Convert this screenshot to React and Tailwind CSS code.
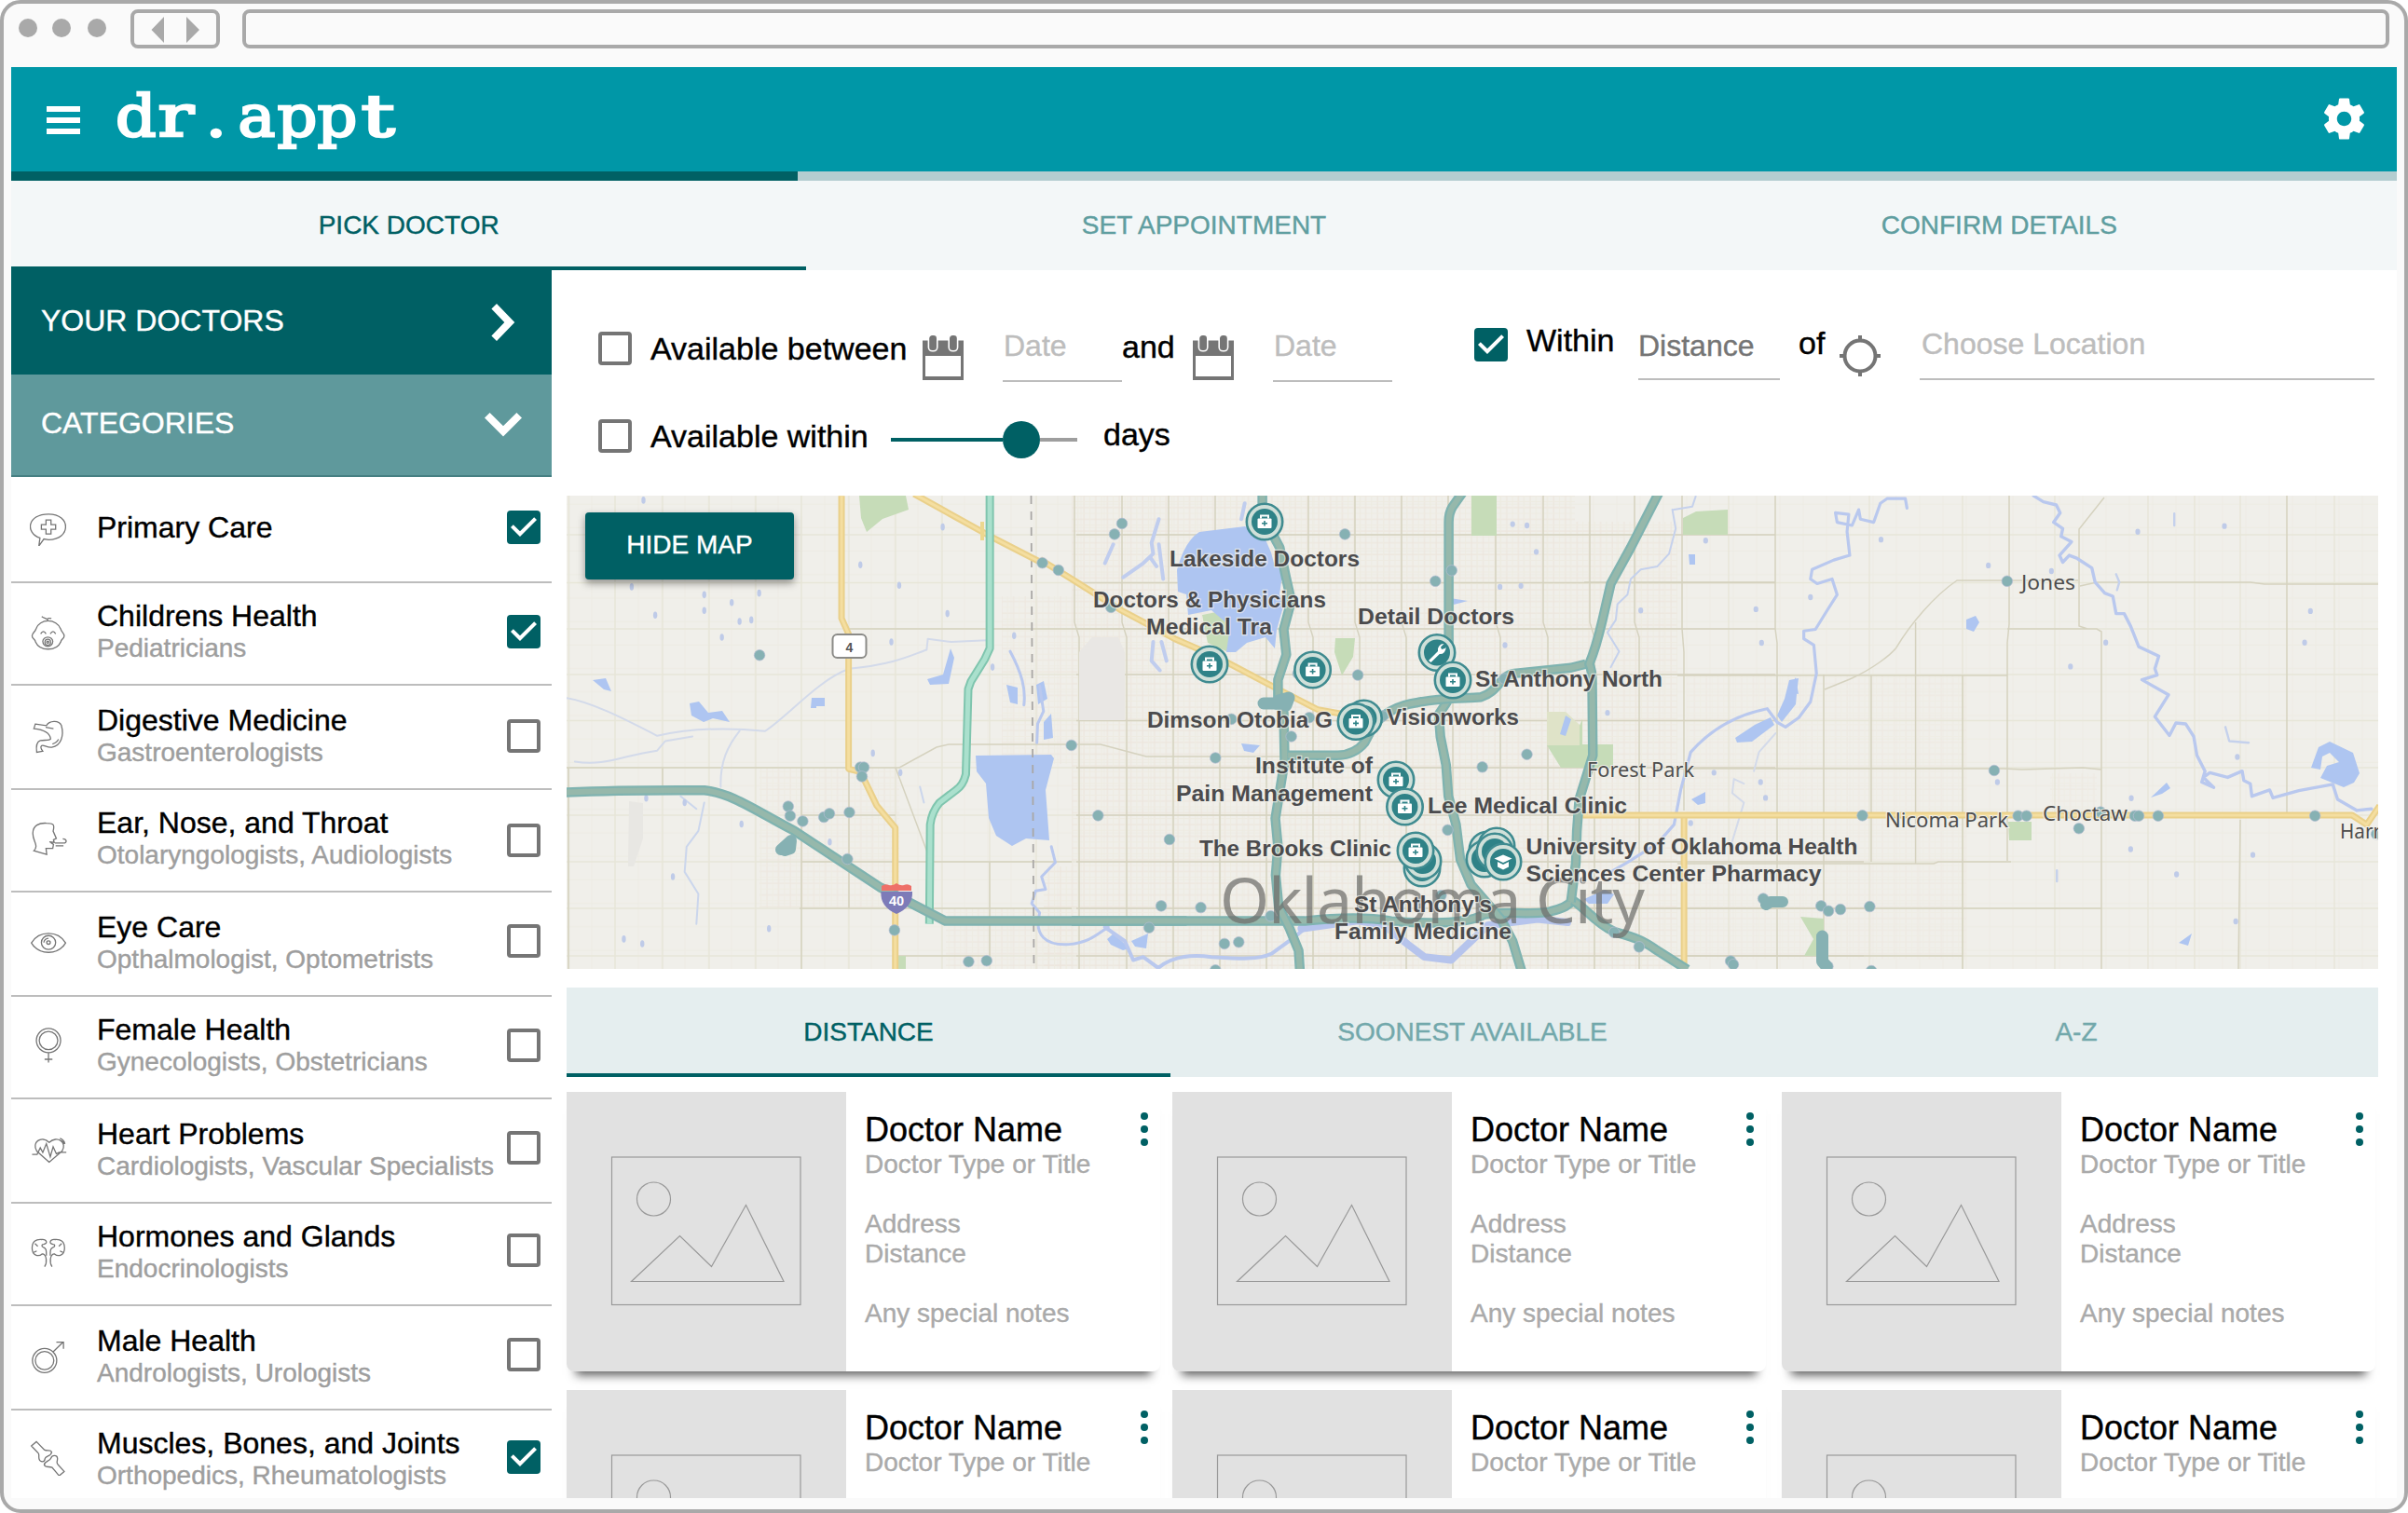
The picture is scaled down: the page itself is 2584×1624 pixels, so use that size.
import React from "react";

const Check = () => (
  <span className="block size-9 shrink-0 rounded bg-[#006064]">
    <svg viewBox="3 3 18 18" className="size-9">
      <path d="M10 17l-5-5 1.41-1.41L10 14.17l7.59-7.59L19 8l-9 9z" fill="#fff" />
    </svg>
  </span>
);
const Box = () => <span className="block size-9 shrink-0 rounded border-4 border-[#757575] bg-white" />;

/* Category icons: thin line drawings, each in a 40px box */
const UPPER = "scale(.3827 .3571)";
const LOWER = "scale(.3827 .3597)";
const ICONS = {
  care: {
    t: `translate(-32 -46) ${UPPER}`,
    d: "M112,217 C70,202 76,145 136,145 C200,145 200,222 136,222 L123,220 L109,241 Z M129,163h14v14h13v14h-13v14h-14v-14h-13v-14h13z",
  },
  baby: {
    t: `translate(-32 -158) ${UPPER}`,
    d: "M101,490 C105,475 120,466 135,466 C150,466 165,475 170,490 C172,500 180,503 180,511 C180,520 172,520 170,530 C164,545 150,551 135,551 C118,551 106,545 100,530 C98,520 90,520 90,511 C90,503 98,500 101,490 M135,466 C133,458 125,460 117,453 M132,461 C135,457 138,457 144,459 M114,505 q8,-14 15,0 M141,505 q8,-14 15,0 M120,528 a14,13 0 1,1 28,0 a14,15 0 1,1 -28,0 M126,530 a8,9 0 1,1 16,0 a8,9 0 1,1 -16,0 M131,530 a3,3 0 1,1 6,0 a3,3 0 1,1 -6,0",
  },
  stomach: {
    t: `translate(-32 -270) ${UPPER}`,
    d: "M99,776 L130,781 C138,765 165,763 172,780 C180,810 172,842 145,846 C132,848 120,836 116,842 C112,846 118,855 120,858 L103,861 C101,845 102,830 113,826 C122,823 138,827 142,821 C140,803 125,793 95,790 Z M128,786 L150,790 M147,836 C155,834 162,826 164,822",
  },
  ent: {
    t: `translate(-32 -382) ${UPPER}`,
    d: "M131,1168 L95,1157 C110,1140 92,1130 92,1105 C92,1080 110,1073 130,1074 C150,1074 154,1078 149,1098 L158,1120 L150,1124 L152,1132 L139,1130 L150,1138 L148,1150 L129,1150 Z M154,1134 H178 C189,1134 188,1121 176,1121 M156,1142 h22",
  },
  eye: {
    t: `translate(-32 -490) ${UPPER}`,
    d: "M88,1434 C110,1396 162,1396 184,1434 C162,1472 110,1472 88,1434Z M116,1433 a20,21 0 1,1 40,0 a20,21 0 1,1 -40,0 M123,1433 a13,13 0 0,1 13,-13 M131,1433 a5,5 0 1,1 10,0 a5,5 0 1,1 -10,0",
  },
  female: {
    t: `translate(-32 -42) ${LOWER}`,
    d: "M102,158 a34,36 0 1,1 68,0 a34,36 0 1,1 -68,0 M110,158 a26,27 0 1,1 52,0 a26,27 0 1,1 -52,0 M136,195 V224 M125,214 H147",
  },
  heart: {
    t: `translate(-32 -152) ${LOWER}`,
    d: "M138,521 L103,488 C88,462 115,440 138,462 C160,440 190,462 174,488 Z M90,498 H104 L113,478 L120,492 L130,466 L141,505 L149,475 L158,496 L166,492 H186 M168,450 q12,4 14,17 M172,457 q6,3 7,10",
  },
  glands: {
    t: `translate(-32 -262) ${LOWER}`,
    d: "M125,833 C133,820 131,795 118,795 C108,804 90,800 90,778 C90,758 100,751 116,752 C132,750 135,765 122,766 C116,766 116,774 122,775 C130,778 130,784 130,800 M146,833 C138,820 140,795 153,795 C163,804 181,800 181,778 C181,758 171,751 155,752 C139,750 136,765 149,766 C155,766 155,774 149,775 C141,778 141,784 141,800 M98,764 l8,8 M95,790 l8,-4 M173,764 l-8,8 M176,790 l-8,-4",
  },
  male: {
    t: `translate(-32 -374) ${LOWER}`,
    d: "M91,1113 a34,36 0 1,1 68,0 a34,36 0 1,1 -68,0 M99,1113 a26,27 0 1,1 52,0 a26,27 0 1,1 -52,0 M149,1087 L177,1058 M158,1058 H178 V1078",
  },
  bones: {
    t: `translate(-32 -484) ${LOWER}`,
    d: "M88,1368 L102,1355 L125,1380 C133,1384 142,1378 145,1386 C144,1400 128,1396 126,1406 C126,1418 112,1416 110,1408 C107,1398 112,1392 106,1388 Z M180,1444 L166,1457 L146,1432 C138,1428 128,1434 124,1424 C126,1412 140,1414 143,1404 C146,1394 160,1394 161,1404 C162,1414 156,1418 163,1424 Z",
  },
};

const LineIcon = ({ name }) => (
  <svg className="size-10" fill="none" stroke="#757575" strokeWidth="1.3">
    <g transform={ICONS[name].t}>
      <path d={ICONS[name].d} vectorEffect="non-scaling-stroke" />
    </g>
  </svg>
);

const CATEGORIES = [
  { icon: "care", title: "Primary Care", on: true, h: "h-[114px]", side: "pt-[34px]" },
  { icon: "baby", title: "Childrens Health", sub: "Pediatricians", on: true, h: "h-[110px]", side: "pt-8" },
  { icon: "stomach", title: "Digestive Medicine", sub: "Gastroenterologists", h: "h-[112px]", side: "pt-[34px]" },
  { icon: "ent", title: "Ear, Nose, and Throat", sub: "Otolaryngologists, Audiologists", h: "h-[110px]", side: "pt-[34px]" },
  { icon: "eye", title: "Eye Care", sub: "Opthalmologist, Optometrists", h: "h-[112px]", side: "pt-8" },
  { icon: "female", title: "Female Health", sub: "Gynecologists, Obstetricians", h: "h-[110px]", side: "pt-8" },
  { icon: "heart", title: "Heart Problems", sub: "Cardiologists, Vascular Specialists", h: "h-[112px]", side: "pt-8" },
  { icon: "glands", title: "Hormones and Glands", sub: "Endocrinologists", h: "h-[110px]", side: "pt-[30px]" },
  { icon: "male", title: "Male Health", sub: "Andrologists, Urologists", h: "h-[112px]", side: "pt-8" },
  { icon: "bones", title: "Muscles, Bones, and Joints", sub: "Orthopedics, Rheumatologists", on: true, h: "h-[110px]", side: "pt-[30px]" },
];

function Category({ c }) {
  return (
    <li className={`flex shrink-0 border-b-2 border-[#bdbdbd] pr-3 pl-5 ${c.h}`}>
      <div className={`w-[72px] shrink-0 ${c.side}`}>
        <LineIcon name={c.icon} />
      </div>
      <div className={`flex flex-1 flex-col justify-end whitespace-nowrap ${c.sub ? "pb-[21px]" : "pb-[40px]"}`}>
        <p className="text-[32px] leading-9 text-black">{c.title}</p>
        {c.sub && <p className="text-[28px] leading-[34px] text-[#9e9e9e]">{c.sub}</p>}
      </div>
      <div className={c.side}>
        <div className="pt-0.5">{c.on ? <Check /> : <Box />}</div>
      </div>
    </li>
  );
}

const LOGO = [
  ["d", 1.1],
  ["r", 1.3],
  [".", 1.15],
  ["a", 1.08],
  ["p", 1.08],
  ["p", 1.08],
  ["t", 1.45],
];

function Header() {
  return (
    <header className="flex h-[112px] items-start bg-[#0097a7] text-white">
      <div className="mt-[42px] ml-[38px] flex w-9 flex-col gap-1.5">
        <span className="h-1.5 bg-white" />
        <span className="h-1.5 bg-white" />
        <span className="h-1.5 bg-white" />
      </div>
      <h1 className="mt-[17px] ml-[38px] flex font-['DejaVu_Serif',serif] text-[62px] leading-[72px] [-webkit-text-stroke:2.6px_white]">
        {LOGO.map(([ch, sx], i) => (
          <span key={i} className="inline-block w-[43.3px] text-center">
            <span className="inline-block" style={{ transform: `scaleX(${sx})` }}>
              {ch}
            </span>
          </span>
        ))}
      </h1>
      <svg viewBox="0 0 24 24" className="mt-[29px] mr-[30px] ml-auto size-[53px]" fill="#fff">
        <path d="M19.43 12.98c.04-.32.07-.64.07-.98s-.03-.66-.07-.98l2.11-1.65c.19-.15.24-.42.12-.64l-2-3.46c-.12-.22-.39-.3-.61-.22l-2.49 1c-.52-.4-1.08-.73-1.69-.98l-.38-2.65C14.46 2.18 14.25 2 14 2h-4c-.25 0-.46.18-.49.42l-.38 2.65c-.61.25-1.17.59-1.69.98l-2.49-1c-.23-.09-.49 0-.61.22l-2 3.46c-.13.22-.07.49.12.64l2.11 1.65c-.04.32-.07.65-.07.98s.03.66.07.98l-2.11 1.65c-.19.15-.24.42-.12.64l2 3.46c.12.22.39.3.61.22l2.49-1c.52.4 1.08.73 1.69.98l.38 2.65c.03.24.24.42.49.42h4c.25 0 .46-.18.49-.42l.38-2.65c.61-.25 1.17-.59 1.69-.98l2.49 1c.23.09.49 0 .61-.22l2-3.46c.12-.22.07-.49-.12-.64l-2.11-1.65zM12 15.5c-1.93 0-3.5-1.57-3.5-3.5s1.57-3.5 3.5-3.5 3.5 1.57 3.5 3.5-1.57 3.5-3.5 3.5z" />
      </svg>
    </header>
  );
}

const Calendar = () => (
  <svg viewBox="0 0 44 48" className="mt-2 h-12 w-11 shrink-0">
    <path d="M0 5.5h44V48H0z" fill="#757575" />
    <path d="M3 22h38v22H3z" fill="#fff" />
    <g fill="#757575" stroke="#fff" strokeWidth="1.6">
      <rect x="6.4" y="-.8" width="9.4" height="17.6" rx="4" />
      <rect x="28.2" y="-.8" width="9.4" height="17.6" rx="4" />
    </g>
  </svg>
);

const DateField = () => (
  <div className="mt-px ml-[42px] h-[57px] w-32 border-b-2 border-[#bdbdbd] pl-px text-[32px] leading-9 text-[#bdbdbd]">Date</div>
);

function Filters() {
  return (
    <section className="pt-[62px] pl-[50px] text-[34px] leading-[38px] whitespace-nowrap text-black">
      <div className="flex h-24 items-start">
        <div className="mt-1">
          <Box />
        </div>
        <span className="mt-[3px] ml-5 w-[292px]">Available between</span>
        <Calendar />
        <DateField />
        <span className="mt-px w-[76px]">and</span>
        <Calendar />
        <DateField />
        <div className="ml-[88px]">
          <Check />
        </div>
        <span className="-mt-1.5 ml-5 w-[120px]">Within</span>
        <div className="mt-px h-[55px] w-[152px] border-b-2 border-[#bdbdbd] text-[32px] leading-9 text-[#757575]">Distance</div>
        <span className="-mt-[3px] ml-5 w-11">of</span>
        <svg viewBox="0 0 44 44" className="mt-2 size-11" fill="none" stroke="#757575" strokeWidth="4">
          <circle cx="22" cy="22" r="16.5" />
          <path d="M22 0v6M22 38v6M0 22h6M38 22h6" />
        </svg>
        <div className="-mt-px ml-[42px] h-[57px] w-[488px] border-b-2 border-[#bdbdbd] pl-0.5 text-[32px] leading-9 text-[#bdbdbd]">
          Choose Location
        </div>
      </div>
      <div className="flex h-[84px] items-start">
        <div className="mt-0.5">
          <Box />
        </div>
        <span className="mt-px ml-5 w-[258px]">Available within</span>
        <div className="mt-1 flex h-10 w-[200px] items-center">
          <span className="h-1 w-[120px] bg-[#006064]" />
          <span className="size-10 rounded-full bg-[#006064]" />
          <span className="h-1 flex-1 bg-[#9e9e9e]" />
        </div>
        <span className="-mt-px ml-7">days</span>
      </div>
    </section>
  );
}

/* ---------- map ---------- */

const WEST = "translate(600 520) scale(.4209 .3381)";
const MID = "translate(1150 520) scale(.3571 .3381)";
const EAST = "translate(1500 520) scale(.3571 .3381)";
const FAR = "translate(2040 520) scale(.347 .3381)";
const TILE = {
  w: [600, 0.4209],
  m: [1150, 0.3571],
  e: [1500, 0.3571],
  f: [2040, 0.347],
};
const place = (tile, x, y) => [TILE[tile][0] + x * TILE[tile][1], 520 + y * 0.3381];

const DOTS = {
  w: [[1435, 124], [1416, 158], [1232, 249], [1273, 272], [511, 542], [1306, 828], [768, 898], [777, 898], [772, 927], [584, 1022], [589, 1052], [621, 1069], [675, 1056], [689, 1045], [740, 1041], [735, 1189], [1374, 1051], [1556, 1127], [855, 1415], [1044, 1515], [1090, 1512], [1535, 1338], [1504, 1407], [1407, 390]],
  m: [[821, 158], [1093, 307], [1142, 273], [860, 605], [660, 800], [432, 868], [388, 1343], [459, 1458], [502, 1453], [432, 1542], [1368, 857], [1234, 897], [1130, 1097], [714, 740], [935, 735], [598, 1370], [480, 745], [1110, 1305], [680, 600], [1300, 617]],
  e: [[1396, 1051], [1098, 1315], [1272, 1338], [1294, 1354], [1330, 1349], [1418, 1340], [1292, 1530], [1000, 1513], [1008, 1524], [725, 1468], [650, 1422], [1423, 1544]],
  f: [[328, 307], [288, 908], [362, 1052], [388, 1052], [550, 1092], [723, 1052], [735, 1052], [795, 1052], [1280, 1052], [617, 1040], [1470, 1110]],
};

const LABELS = [
  ["Lakeside Doctors", 1255, 607.5, 204],
  ["Doctors & Physicians", 1173, 652, 250],
  ["Medical Tra", 1230, 681, 135],
  ["Detail Doctors", 1457, 669.5, 168],
  ["St Anthony North", 1583, 737, 201],
  ["Visionworks", 1488, 778, 142],
  ["Dimson Otobia G", 1231, 781, 199],
  ["Institute of", 1347, 830, 126],
  ["Pain Management", 1262, 859.5, 211],
  ["Lee Medical Clinic", 1532, 872.5, 214],
  ["The Brooks Clinic", 1287, 919, 206],
  ["University of Oklahoma Health", 1637.5, 917, 356],
  ["Sciences Center Pharmacy", 1637.5, 946, 317],
  ["St Anthony's", 1453, 979, 148],
  ["Family Medicine", 1432, 1008, 190],
];

const TOWNS = [
  ["Forest Park", 1703, 834, 115],
  ["Nicoma Park", 2023, 888, 132],
  ["Choctaw", 2192, 881, 91],
  ["Jones", 2169, 633, 58],
  ["Harr", 2511, 900, 44],
];

const Bag = () => (
  <>
    <rect x="-7.5" y="-3.5" width="15" height="10.5" rx="1" fill="#fff" />
    <path d="M-4 -3.5v-3h8v3" fill="none" stroke="#fff" strokeWidth="2" />
    <path d="M-3 1.8h6M0 -1v5.6" stroke="#2f8287" strokeWidth="1.6" />
  </>
);
const Pin = ({ x, y, kind = "bag" }) => (
  <g transform={`translate(${x} ${y})`}>
    <circle r="19.2" fill="#d0e0d9" stroke="#3f8b90" strokeWidth="2.6" />
    <circle r="14" fill="#2f8287" />
    {kind === "bag" && <Bag />}
    {kind === "wrench" && (
      <path d="M-8 9.5 L2 -.5 A6.5 6.5 0 0 1 8.5 -8.5 L5 -5 L6 -2.5 L9.5 -3.5 L10.5 -5 A6.5 6.5 0 0 1 3.8 2.6 L-5.5 11.5 Z" fill="#fff" transform="translate(-1 -1)" />
    )}
    {kind === "cap" && (
      <>
        <path d="M-9.5 -3.5 L0 -7.5 L9.5 -3.5 L0 1Z" fill="#fff" />
        <path d="M-6 0 L0 3 L6 0 V5.5 L0 8.5 L-6 5.5Z" fill="#fff" />
      </>
    )}
  </g>
);

const rows = [574, 625.5, 675, 724, 773.5, 824, 875, 925, 975, 1026];
const westCols = [610.5, 660, 711, 761, 811, 860, 911, 961, 1011, 1062, 1112];
const cityCols = [1153, 1204, 1254, 1304, 1354, 1404, 1454, 1504, 1554, 1605, 1656, 1706, 1754];
const eastCols = [1855, 2006, 2106, 2205, 2305, 2355, 2404, 2505];

const KINDS = {
  teal: { edge: "#7fb3b0", edgeW: 10.5, fill: "#96b8ab", fillW: 6 },
  mint: { edge: "#7fc5ae", edgeW: 9, fill: "#aae0cd", fillW: 5 },
  sand: { edge: "#ead08a", edgeW: 7, fill: "#f4dea0", fillW: 3 },
};
const Road = ({ t, d, kind }) => (
  <g transform={t} fill="none" strokeLinejoin="round">
    <path d={d} vectorEffect="non-scaling-stroke" stroke={KINDS[kind].edge} strokeWidth={KINDS[kind].edgeW} />
    <path d={d} vectorEffect="non-scaling-stroke" stroke={KINDS[kind].fill} strokeWidth={KINDS[kind].fillW} />
  </g>
);
const Stream = ({ t, d, w = 3, c = "#b9c8ee" }) => (
  <g transform={t} fill="none" strokeLinejoin="round" strokeLinecap="round">
    <path d={d} vectorEffect="non-scaling-stroke" stroke={c} strokeWidth={w} />
  </g>
);

function CityMap() {
  return (
    <svg viewBox="608 532 1944 508" className="block h-[508px] w-[1944px] [-webkit-text-stroke:0]">
      <defs>
        <pattern id="streets" width="12.6" height="12.6" patternUnits="userSpaceOnUse">
          <path d="M0 3H12.6M4 0V12.6" stroke="#ede6dd" strokeWidth="1.2" fill="none" />
          <path d="M0 9.3H12.6M10.3 0V12.6" stroke="#eeebe1" strokeWidth="1" fill="none" />
        </pattern>
        <pattern id="lanes" width="25" height="25.2" patternUnits="userSpaceOnUse">
          <path d="M0 12H25M10 0V25.2" stroke="#edece4" strokeWidth="1" fill="none" />
        </pattern>
      </defs>
      <rect x="608" y="532" width="1944" height="508" fill="#f0efea" />
      <rect x="608" y="532" width="1944" height="508" fill="url(#lanes)" />
      <path d="M1150 532H1690V560H1800V1040H1120V930H1150Z" fill="url(#streets)" />
      <path d="M815 824H965V975H815Z M1015 975H1150V1040H1015Z M1075 640H1150V820H1075Z" fill="url(#streets)" opacity=".8" />
      <path d="M1810 724H2110V1030H1810Z M2200 830H2250V880H2200Z" fill="url(#streets)" opacity=".6" />

      {/* section lines */}
      <g stroke="#e7e6d8" strokeWidth="1.4">
        {rows.map((y) => (
          <path key={y} d={`M608 ${y}H2552`} />
        ))}
        {westCols.map((x) => (
          <path key={x} d={`M${x} 532V1040`} />
        ))}
        {eastCols.map((x) => (
          <path key={x} d={`M${x} 532V1040`} />
        ))}
      </g>
      <g stroke="#d5d2bf" strokeWidth="1.5" fill="none">
        {rows.map((y) => (
          <path key={y} d={`M1155 ${y}H${y > 900 ? 2000 : 1905}`} />
        ))}
        {cityCols.map((x) => (
          <path key={x} d={`M${x} 532V668L${x + 5} 684V1040`} />
        ))}
        <path d="M608 824H965L1005 802L1018 799H1181L1230 812H1380 M610 824V1040 M711 824V843 M860 824V1040 M911 825V975 M961 824L997 920 M860 925H1150 M858 975H1150 M964 1026H1060 M1062 925V975V1030 M911 675H1230 M860 875H961" />
        <path d="M1805 532V675L1807 700V870 M1905 532V675L1907 690V1040 M1957 724V1040 M2008 725V925 M2055.6 668V927 M2106 725V1040 M2156 532V670L2154 690V924 M1800 725H2154 M1800 825H2150L2170 826L2235 824L2255 826 M1800 927H2075L2080 925H2158 M1800 975H2255 M1800 1026H2106 M2154 675H2250L2255 678V1040 M2454 532V875 M2404 880L2402 1040 M2258 534L2231 568V672L2240 675" />
        <path d="M1958 740L1985 729C2010 718 2030 702 2035 695C2050 670 2075 640 2100 623H2230 M2232 629L2250 625H2415L2430 627H2552" />
        <path d="M1700 975H1810 M1700 625H1905" />
      </g>

      {/* parks and fields */}
      <g fill="#c6dcb8">
        <path d="M922 532L924 556L930 571L947 557L975 547L972 532Z" />
        <path d="M1579 532H1606V575H1579Z M1806 556L1820 549L1854 547V574H1806Z" />
        <path d="M1290 660L1316 655L1325 690L1318 700L1296 690Z M1433 685H1454L1452 705L1440 725L1432 700Z" />
        <path d="M1660 800L1690 790L1698 772L1698 799H1731V824H1675Z" />
        <path d="M1932 984L1957 986V1026H1936L1946 1008Z M2155 882H2180V902H2156Z M964 1026H972V1040H964Z" />
      </g>
      <path d="M1660 764H1680L1695 778V800H1660Z" fill="#dfe3c8" />
      <path d="M1158 700L1172 684H1200L1207 700V773H1158Z" fill="#e9e7e4" />
      <path d="M675 860L690 862V900L680 930H674Z" fill="#e8e7e3" />

      {/* lakes */}
      <g fill="#aec5f1">
        <path d="M1047 811L1128 810L1131 814L1122 848L1126 902L1101 900L1086 908L1069 897L1061 878L1058 841L1048 828Z" />
        <path d="M1263 612Q1271 581 1287 571L1336 565L1357 577L1364 593L1368 608L1377 611L1373 638L1378 648L1370 676L1368 696L1358 684L1338 690L1326 700L1316 700L1320 672L1300 655L1275 660L1273 638L1264 635Z" />
        <path d="M740 755L750 753L760 765L775 763L783 775L765 771L755 775L742 768Z M636 730L650 728L656 742L648 740Z M871 749H885V758H876V760H870Z M995 729L1012 724L1020 696L1024 706L1018 734L998 735Z" />
        <path d="M2480 824L2488 802L2500 796L2525 808L2532 830L2526 840L2515 845L2490 835L2497 822L2510 818L2500 808L2492 812L2490 826Z" />
        <path d="M2308 856L2325 840L2329 846L2320 852Z M1862 792L1883 778L1900 770L1904 778L1880 796L1864 797Z M1907 768L1915 750L1920 730L1930 728L1928 745L1927 756L1912 775Z M1918 742L1927 727L1930 745Z" />
        <path d="M1674 788L1680 768L1686 772L1680 790Z M1815 858L1830 850V862L1822 864Z M1188 1008L1195 1002L1212 1018L1205 1020L1192 1014Z M1214 1010L1232 1002L1230 1018L1218 1016Z M1812 595H1819V606H1813Z M1120 775L1128 766L1130 792L1120 794Z M1112 735L1120 731L1124 750L1114 756Z M1080 735L1092 738V756L1084 754Z" />
        <path d="M1700 965L1722 955L1732 960L1725 970H1705Z M2338 1012L2352 1002L2348 1015Z M2110 665L2120 661L2124 668L2118 678L2110 675Z M1556 642L1575 645L1560 649Z M1332 798L1352 800L1345 808L1335 806Z" />
      </g>

      {/* streams */}
      <Stream t={WEST} w={2} c="#d3daea" d="M19,678 C80,690 160,740 250,798 C330,775 420,770 525,783 C580,740 660,620 740,585 C860,570 900,540 937,525 L940,490 L1000,500 L1090,495 M460,783 C430,830 410,880 412,960 M40,880 C120,895 160,860 250,845 L270,815 L340,800" />
      <Stream t={WEST} w={2} c="#cbd6ec" d="M370,1010 L355,1100 L325,1150 L320,1230 L355,1300 L350,1395 M310,990 L350,1030 M930,1010 L920,960" />
      <Stream t={WEST} d="M1225,640 L1235,720 L1220,760 L1218,820 M1150,530 C1180,600 1190,650 1185,700 M1255,1150 L1265,1200 L1230,1245 L1240,1285 L1215,1290 L1205,1330 L1225,1360 C1210,1430 1240,1465 1300,1460 C1350,1455 1370,1430 1400,1405" />
      <Stream t={MID} d="M100,1405 L160,1450 L185,1510 L215,1500 L260,1535 C300,1500 350,1490 420,1500 C500,1505 560,1510 600,1490 C640,1460 680,1430 700,1410 L800,1395" w={4} />
      <Stream t={MID} w={8} c="#b6c4ec" d="M690,1410 L860,1385 L940,1400 L1010,1460 L1060,1500 L1140,1510 L1200,1450 L1250,1400 L1400,1380 L1490,1390" />
      <Stream t={MID} d="M155,295 L215,250 L245,220 L240,185 L262,110 M262,190 L275,300 M235,230 L255,260 M245,500 L240,560 L265,590 M125,190 L100,250 M520,60 L510,110 M270,500 L285,560" w={4} c="#c0cdee" />
      <Stream t={EAST} d="M825,80 L835,140 L815,220 L780,260 L730,270 L700,300 L690,350 L660,380 L655,430 L630,470 L665,530 L640,580 M895,38 L885,70 L830,80" w={2} c="#c5d1ec" />
      <Stream t={EAST} d="M1530,75 L1525,45 L1470,45 L1450,60 L1430,120 L1390,110 L1385,80 L1365,130 L1320,120 L1315,90 L1355,95 L1350,150 L1358,225 L1310,240 L1245,270 L1240,300 L1260,315 L1305,300 L1320,350 L1290,400 L1255,460 L1220,465 L1220,490 L1250,510 L1258,600 L1240,690 L1205,740 L1165,770 L1140,755 L1110,712 C1000,735 930,790 880,850 L850,970 L830,1080 L780,1140 L690,1200 L640,1230" w={3.2} />
      <Stream t={EAST} d="M1135,790 L1085,850 L1070,910 M1040,950 L1010,935 L1005,980 L1040,1010 L1020,1080 L1000,1150" w={2} c="#d3daea" />
      <Stream t={FAR} w={3.4} d="M410,36 L440,55 L480,65 L492,90 L472,120 L500,140 L495,165 L527,182 L490,225 L500,247 L520,225 L545,235 L590,265 L600,310 L630,345 L655,355 L665,410 L690,410 L710,450 L735,515 L797,545 L785,585 L792,605 L745,620 L827,668 L785,737 L830,797 L850,757 L880,760 L905,800 L915,860 L940,910 L930,945 L967,962 L935,930 L955,915 L1010,930 L1055,910 L1060,940 L1080,950 L1085,990 L1140,970 L1150,995 L1230,972 L1335,952 L1350,1000 L1410,1035 L1455,1030" />
      <Stream t={FAR} w={2.4} c="#c5d1ec" d="M1003,770 L1015,815 L1075,820 M845,92 L845,130 M665,285 L675,310 L668,335 M482,1225 L482,1260" />
      <g fill="#bfcbe8">
        {[[215, 50], [245, 415], [370, 350], [370, 400], [440, 375], [415, 485], [460, 435], [490, 430], [510, 345], [768, 255], [867, 320], [990, 410], [978, 135], [847, 500], [800, 853], [222, 996], [320, 1010], [465, 1078], [290, 1245], [165, 1443], [212, 1458], [535, 1410], [870, 915], [690, 1135], [185, 325], [1160, 480], [1105, 580]].map(([x, y]) => {
          const [cx, cy] = place("w", x, y);
          return <ellipse key={`${x}-${y}`} cx={cx} cy={cy} rx="2.2" ry="3.8" />;
        })}
        {[[270, 257], [465, 275], [633, 502], [524, 578], [732, 150], [1000, 132], [1266, 402], [1248, 502], [712, 996], [710, 1158], [852, 1238], [1088, 1176], [1040, 865], [1035, 1387], [298, 945]].map(([x, y]) => {
          const [cx, cy] = place("f", x, y);
          return <ellipse key={`${x}-${y}`} cx={cx} cy={cy} rx="2.6" ry="3.2" />;
        })}
        {[[345, 126], [388, 130], [416, 214], [307, 325], [370, 322], [925, 178], [1452, 175], [1240, 358], [1076, 396], [1093, 503], [730, 400], [950, 915], [1090, 945], [1105, 995], [880, 1075], [630, 725], [322, 510]].map(([x, y]) => {
          const [cx, cy] = place("e", x, y);
          return <ellipse key={`${x}-${y}`} cx={cx} cy={cy} rx="2.6" ry="3.2" />;
        })}
      </g>

      {/* county line */}
      <path d="M1106.500 532L1109.500 1040" stroke="#a9a7a5" strokeWidth="1.8" strokeDasharray="9 8" />

      {/* highways */}
      <Road kind="sand" t={WEST} d="M720,36 V425 L738,475 V903 L768,912 L810,1020 L857,1090 V1540 M905,30 L1100,165 L1240,255" />
      <Road kind="sand" t={MID} d="M-95,238 L0,300 L150,400 L310,490 L440,550 L620,650 L740,715 L810,728" />
      <path d="M1054 560V580" stroke="#ecd78f" strokeWidth="4" />
      <Road kind="sand" t={EAST} d="M860,1050 V1540" />
      <Road kind="sand" t={FAR} d="M-985,1050 H1395 L1440,1080 L1480,1020" />
      <Road kind="mint" t={WEST} d="M1098,30 V520 L1085,555 L1050,625 L1043,650 L1037,920 Q1030,955 1012,970 L970,1010 Q950,1040 946,1080 L944,1395" />
      <Road kind="teal" t={WEST} d="M15,978 C150,970 250,970 370,971 C440,980 500,1035 600,1100 L820,1280 L985,1386 H1600" />
      <Road kind="teal" t={MID} d="M0,1386 H700 C800,1375 900,1375 960,1386 C1060,1395 1180,1395 1230,1370 C1260,1350 1400,1370 1440,1355 C1480,1345 1495,1335 1505,1320" />
      <Road kind="teal" t={EAST} d="M525,1320 C560,1340 590,1390 650,1420 C720,1440 740,1450 780,1480 L870,1540" />
      <Road kind="teal" t={MID} d="M573,30 V110 L600,150 L625,200 L643,290 L660,370 L637,460 L645,540 L620,620 L620,680 L637,725 L640,880 L632,930 L612,1060 L620,1150 L613,1240 L622,1340 L655,1410 L682,1480 L686,1545" />
      <Road kind="teal" t={MID} d="M1175,25 L1145,70 Q1133,90 1133,120 V560 L1128,690 L1103,730 L1108,800 L1125,890 L1132,990 L1155,1080 L1168,1190 L1200,1270 L1290,1380 L1325,1450 L1352,1545" />
      <Road kind="teal" t={MID} d="M650,860 H800 Q850,858 880,820 L905,770 C930,730 980,700 1040,692 C1120,675 1190,680 1230,675 C1280,660 1290,605 1330,600 L1500,582 L1545,570" />
      <Road kind="teal" t={EAST} d="M785,25 L700,200 L640,315 L615,430 Q595,520 575,570 Q585,590 584,640 L586,860 L545,1000 L538,1100 L535,1200 L520,1325" />

      {/* minor places */}
      <g fill="#86b1b3" stroke="#b5bdd2" strokeWidth=".7">
        {Object.entries(DOTS).flatMap(([tile, pts]) =>
          pts.map(([x, y]) => {
            const [cx, cy] = place(tile, x, y);
            return <circle key={`${tile}${x}-${y}`} cx={cx} cy={cy} r="5.8" />;
          })
        )}
      </g>
      <g fill="none" stroke="#86b1b3" strokeWidth="13" strokeLinecap="round" strokeLinejoin="round">
        <path d="M1356 755H1368L1380 757L1383 749L1372 752" />
        <path d="M838 912L849 902L848 911L842 913" strokeWidth="12" />
        <path d="M1895 971L1900 968H1913" strokeWidth="12" />
        <path d="M1955.500 1005V1032L1959 1036" />
      </g>

      {/* shields */}
      <rect x="893.500" y="681" width="36" height="25" rx="5" fill="#fff" stroke="#8b8b88" strokeWidth="2" />
      <text x="911.500" y="700" textAnchor="middle" fontSize="14" fontWeight="700" fill="#555">4</text>
      <path d="M946 951Q950 948 954 950Q958 951 962 948Q966 951 970 950Q974 948 978 951V956H946Z" fill="#ee7069" />
      <path d="M945.500 957H979Q980 973 962 981Q944 973 945.500 957Z" fill="#7d7bb8" />
      <text x="962" y="972" textAnchor="middle" fontSize="14.500" fontWeight="700" fill="#fff">40</text>

      {/* names */}
      <text x="1309" y="990.500" fontSize="68" textLength="456" fill="#6d6d6b" fillOpacity=".72" className="font-['Noto_Sans',sans-serif]">
        Oklahoma City
      </text>
      <g fontSize="21.500" fill="#4d4d4d" stroke="#f0efe9" strokeWidth="2" paintOrder="stroke" className="font-['Noto_Sans',sans-serif]">
        {TOWNS.map(([s, x, y, w]) => (
          <text key={s} x={x} y={y} textLength={w} lengthAdjust="spacingAndGlyphs">
            {s}
          </text>
        ))}
      </g>

      <Pin x={1463.500} y={771} kind="ring" />
      {[[1357, 560], [1298, 713], [1408.6, 719], [1455, 774.6], [1498, 837], [1507.5, 866]].map(([x, y]) => (
        <Pin key={x} x={x} y={y} />
      ))}
      <Pin x={1542} y={700.5} kind="wrench" />
      <Pin x={1559} y={730} />
      <Pin x={1526} y={932} kind="ring" />
      <Pin x={1527} y={924} kind="ring" />
      <Pin x={1519} y={913} />
      <Pin x={1596} y={912} kind="ring" />
      <Pin x={1606} y={908} kind="ring" />
      <Pin x={1593} y={922} kind="ring" />
      <Pin x={1604} y={914} kind="ring" />
      <Pin x={1613} y={925} kind="cap" />

      <g fontSize="24" fontWeight="700" fill="#4b4b4d" stroke="#f0efe9" strokeOpacity=".7" strokeWidth="2.5" paintOrder="stroke">
        {LABELS.map(([s, x, y, w]) => (
          <text key={s} x={x} y={y} textLength={w} lengthAdjust="spacingAndGlyphs">
            {s}
          </text>
        ))}
      </g>
    </svg>
  );
}

/* ---------- doctors ---------- */

function DoctorCard() {
  return (
    <article className="flex h-[300px] w-[637px] shrink-0 rounded-b-lg bg-white shadow-[0_14px_10px_-10px_rgba(0,0,0,0.65)]">
      <div className="size-[300px] shrink-0 overflow-hidden rounded-bl-lg bg-[#e1e1e1]">
        <svg viewBox="0 0 300 300" className="size-[300px]" fill="none" stroke="#999" strokeWidth="1.2">
          <rect x="48.500" y="70" width="202.500" height="158.500" />
          <circle cx="93.500" cy="115" r="18" />
          <path d="M69.500 203.500L121.500 154.500L155.500 187.500L192.500 121.500L233 203.500Z" />
        </svg>
      </div>
      <div className="flex-1 pt-[20px] pl-5 whitespace-nowrap">
        <h3 className="text-[36px] leading-[42px] text-black">Doctor Name</h3>
        <p className="text-[28px] leading-8 text-[#aaa]">Doctor Type or Title</p>
        <p className="mt-8 text-[28px] leading-8 text-[#aaa]">Address</p>
        <p className="text-[28px] leading-8 text-[#aaa]">Distance</p>
        <p className="mt-8 text-[28px] leading-8 text-[#aaa]">Any special notes</p>
      </div>
      <div className="mt-[22px] mr-[13px] flex flex-col gap-1.5">
        <span className="size-2 rounded-full bg-[#006064]" />
        <span className="size-2 rounded-full bg-[#006064]" />
        <span className="size-2 rounded-full bg-[#006064]" />
      </div>
    </article>
  );
}

const CardRow = () => (
  <div className="flex">
    <DoctorCard />
    <div className="w-[13px]" />
    <DoctorCard />
    <div className="w-[17px]" />
    <DoctorCard />
  </div>
);

export default function App() {
  return (
    <div className="flex h-[1624px] w-[2584px] flex-col overflow-hidden rounded-[22px] border-4 border-[#a9a9a9] bg-[#fafafa] px-2 pb-3 font-['Liberation_Sans',Arial,sans-serif] [-webkit-text-stroke:0.4px]">
      <div className="flex h-[68px] shrink-0 items-start pt-1.5 pr-2 pl-2">
        <div className="mt-2.5 flex">
          <span className="size-5 rounded-full bg-[#a9a9a9]" />
          <span className="ml-4 size-5 rounded-full bg-[#a9a9a9]" />
          <span className="ml-[18px] size-5 rounded-full bg-[#a9a9a9]" />
        </div>
        <div className="ml-[26px] flex h-[42px] w-24 rounded-lg border-4 border-[#a9a9a9]">
          <svg viewBox="0 0 88 34" className="h-[34px] w-[88px]" fill="#a9a9a9">
            <path d="M32 4V32L18.500 18Z M56 4V32L70 18Z" />
          </svg>
        </div>
        <div className="ml-6 h-[42px] flex-1 rounded-lg border-4 border-[#a9a9a9]" />
      </div>

      <div className="flex min-h-0 flex-1 flex-col overflow-hidden bg-white">
        <Header />
        <div className="flex h-2.5 shrink-0 bg-[#b4cdd0]">
          <div className="w-[844px] bg-[#006064]" />
        </div>
        <nav className="grid h-24 shrink-0 grid-cols-3 bg-[#f3f7f8] text-[28px] leading-8 text-[#5f9ea0]">
          <div className="flex items-center justify-center border-b-4 border-[#006064] pt-1 text-[#006064]">PICK DOCTOR</div>
          <div className="flex items-center justify-center">SET APPOINTMENT</div>
          <div className="flex items-center justify-center">CONFIRM DETAILS</div>
        </nav>

        <div className="flex min-h-0 flex-1">
          <aside className="flex w-[580px] shrink-0 flex-col overflow-hidden">
            <div className="flex h-28 shrink-0 items-center justify-between bg-[#006064] pr-8 pl-8 text-[32px] leading-9 text-white">
              <span className="pb-1">YOUR DOCTORS</span>
              <svg viewBox="520 326 40 40" className="size-10" fill="#fff">
                <path d="M533 326L552.300 346L533 366L527.400 360.500L541.300 346L527.400 331.500Z" />
              </svg>
            </div>
            <div className="flex h-[110px] shrink-0 items-center justify-between border-b-2 border-[#457f82] bg-[#5f999c] pr-8 pl-8 text-[32px] leading-9 text-white">
              <span className="pb-1">CATEGORIES</span>
              <svg viewBox="520 436 40 40" className="size-10" fill="#fff">
                <path d="M520 448.500L525.600 443L540 457.300L554.400 443L560 448.500L540 468.500Z" />
              </svg>
            </div>
            <ul className="flex flex-col">
              {CATEGORIES.map((c) => (
                <Category key={c.title} c={c} />
              ))}
            </ul>
          </aside>

          <main className="min-w-0 flex-1 overflow-hidden">
            <Filters />
            <div className="ml-4">
              <div className="relative h-[508px] w-[1944px]">
                <CityMap />
                <button className="absolute top-[18px] left-5 h-[72px] w-56 rounded bg-[#006064] pb-0.5 text-[28px] leading-8 text-white shadow-[0_4px_8px_rgba(0,0,0,0.4)]">
                  HIDE MAP
                </button>
              </div>
              <div className="mt-5 grid h-24 w-[1944px] grid-cols-3 bg-[#e5eeef] text-[28px] leading-8 text-[#72a8ab]">
                <div className="flex items-center justify-center border-b-4 border-[#006064] pt-1 text-[#006064]">DISTANCE</div>
                <div className="flex items-center justify-center">SOONEST AVAILABLE</div>
                <div className="flex items-center justify-center">A-Z</div>
              </div>
              <div className="mt-4 flex flex-col gap-5">
                <CardRow />
                <CardRow />
              </div>
            </div>
          </main>
        </div>
      </div>
    </div>
  );
}
